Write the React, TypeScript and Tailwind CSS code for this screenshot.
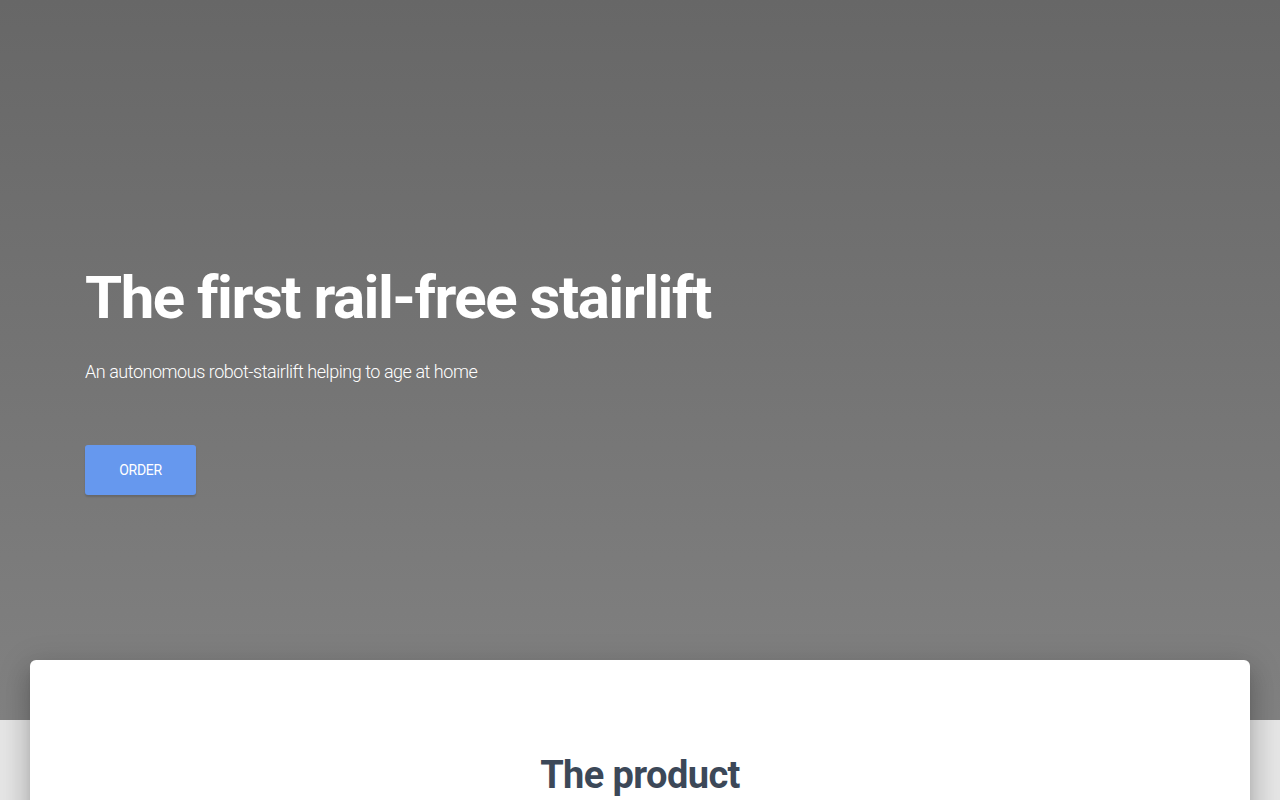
export default function App() {
  return (
    <div className="min-h-screen bg-[#e5e5e5] font-['Roboto',sans-serif]">
      <section className="h-[720px] bg-gradient-to-b from-[#676767] to-[#818181] px-[85px] pt-[262px]">
        <h1 className="text-[60px] font-bold leading-[72px] tracking-[-1.5px] text-white">The first rail-free stairlift</h1>
        <p className="mt-[25px] text-[18px] font-light leading-[26px] tracking-[-0.46px] text-white">
          An autonomous robot-stairlift helping to age at home
        </p>
        <button className="mt-[60px] h-[50px] w-[111px] rounded-[3px] bg-[#6698ee] text-[14px] tracking-[-0.3px] text-white shadow-[0_2px_2px_rgba(0,0,0,0.14)]">
          ORDER
        </button>
      </section>
      <main className="relative z-10 mx-[30px] -mt-[60px] rounded-[6px] bg-white pt-[90px] pb-16 shadow-[0_16px_24px_2px_rgba(0,0,0,0.14),0_6px_30px_5px_rgba(0,0,0,0.12),0_8px_10px_-5px_rgba(0,0,0,0.2)]">
        <h2 className="text-center text-[38px] font-bold leading-[50px] tracking-[-0.6px] text-[#3c4858]">The product</h2>
        <div className="h-[200px]" />
      </main>
    </div>
  );
}
